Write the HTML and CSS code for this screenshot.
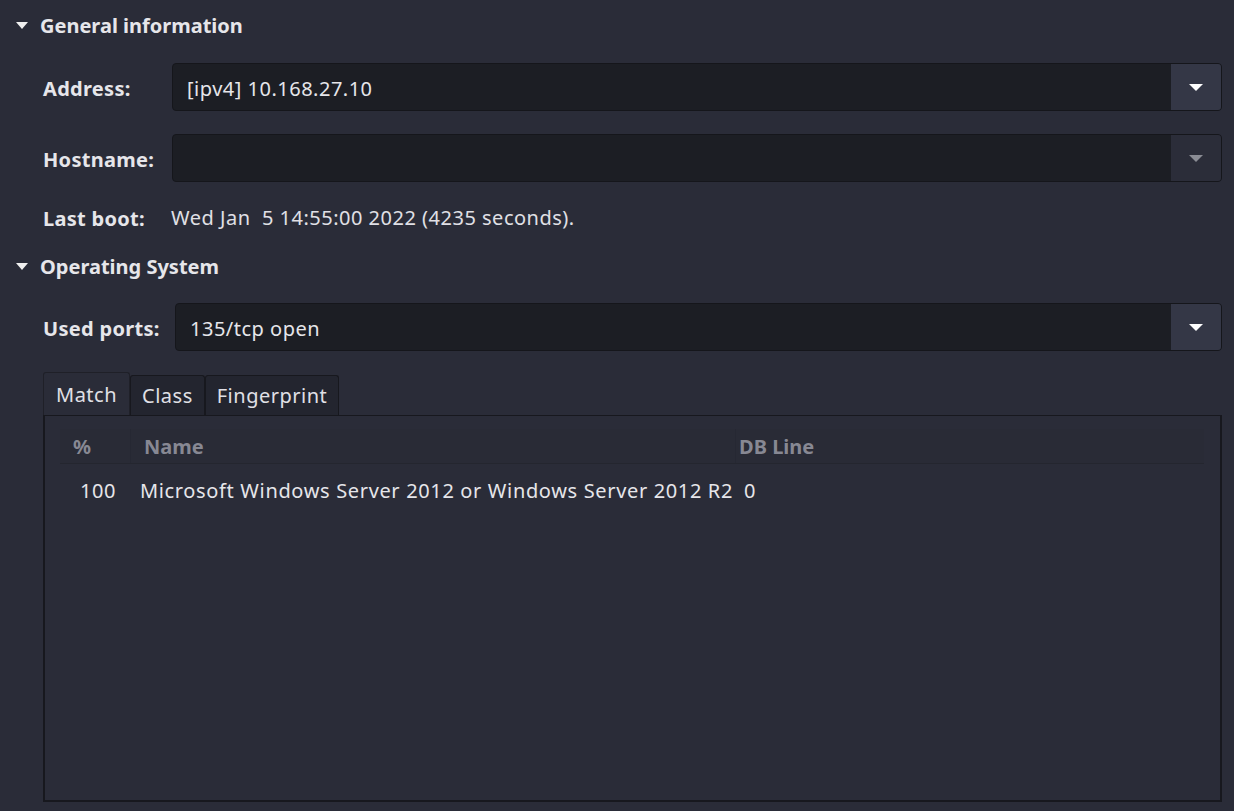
FILE: index.html
```html
<!DOCTYPE html>
<html>
<head>
<meta charset="utf-8">
<link rel="stylesheet" href="styles.css">
</head>
<body>
<div class="page">
  <div class="section-head"><span class="tri"></span><span>General information</span></div>
  <div class="row row-address">
    <div class="label w-addr">Address:</div>
    <div class="combo">
      <div class="combo-text">[ipv4] 10.168.27.10</div>
      <div class="combo-btn"><span class="arrow"></span></div>
    </div>
  </div>
  <div class="row row-host">
    <div class="label w-addr">Hostname:</div>
    <div class="combo">
      <div class="combo-text"></div>
      <div class="combo-btn dim"><span class="arrow dim"></span></div>
    </div>
  </div>
  <div class="row row-boot">
    <div class="label w-boot">Last boot:</div>
    <div class="value">Wed Jan &nbsp;5 14:55:00 2022 (4235 seconds).</div>
  </div>
  <div class="section-head os"><span class="tri"></span><span>Operating System</span></div>
  <div class="row row-ports">
    <div class="label w-ports">Used ports:</div>
    <div class="combo">
      <div class="combo-text">135/tcp open</div>
      <div class="combo-btn"><span class="arrow"></span></div>
    </div>
  </div>
  <div class="tabs">
    <div class="tab active">Match</div>
    <div class="tab">Class</div>
    <div class="tab">Fingerprint</div>
  </div>
  <div class="panel">
    <div class="thead">
      <div class="th c-pct">%</div>
      <div class="th c-name">Name</div>
      <div class="th c-db">DB Line</div>
    </div>
    <div class="trow">
      <div class="td c-pct">100</div>
      <div class="td c-name">Microsoft Windows Server 2012 or Windows Server 2012 R2</div>
      <div class="td c-db">0</div>
    </div>
  </div>
</div>
</body>
</html>
```
FILE: styles.css
```css
html, body {
  margin: 0;
  padding: 0;
  background: #2a2c38;
}
body {
  width: 1234px;
  height: 811px;
  overflow: hidden;
  font-family: "Noto Sans", "DejaVu Sans", sans-serif;
  font-size: 20px;
  letter-spacing: 0.5px;
  color: #e6e6ea;
}
.page {
  padding: 10px 12px 0 16px;
  display: flex;
  flex-direction: column;
}
.section-head {
  display: flex;
  align-items: center;
  height: 30px;
  font-weight: bold;
  letter-spacing: 0;
  gap: 12px;
}
.section-head.os {
  margin-top: 19px;
}
.tri {
  width: 0;
  height: 0;
  border-left: 6px solid transparent;
  border-right: 6px solid transparent;
  border-top: 7px solid #f0f0f0;
}
.row {
  display: flex;
  align-items: center;
  padding-left: 27px;
}
.row-address { margin-top: 23px; }
.row-host { margin-top: 23px; }
.row-boot { margin-top: 20px; height: 30px; }
.row-ports { margin-top: 22px; }
.label {
  font-weight: bold;
  letter-spacing: 0.3px;
  padding-top: 2px;
}
.w-addr { width: 129px; }
.w-boot { width: 128px; }
.w-ports { width: 132px; }
.value {
  color: #e0e0e6;
  padding-top: 1px;
}
.combo {
  flex: 1;
  height: 48px;
  display: flex;
  background: #1c1e24;
  border: 1px solid #15161b;
  border-radius: 4px;
  overflow: hidden;
  box-sizing: border-box;
}
.combo-text {
  flex: 1;
  display: flex;
  align-items: center;
  padding-left: 14px;
  padding-top: 2px;
}
.combo-btn {
  width: 50px;
  background: #343746;
  display: flex;
  align-items: center;
  justify-content: center;
}
.combo-btn.dim {
  background: #2b2d39;
}
.arrow {
  width: 0;
  height: 0;
  border-left: 7px solid transparent;
  border-right: 7px solid transparent;
  border-top: 7px solid #ffffff;
}
.arrow.dim {
  border-top-color: #8a8c94;
}
.tabs {
  display: flex;
  margin-top: 21px;
  margin-left: 27px;
  align-items: flex-end;
  height: 43px;
}
.tab {
  height: 40px;
  box-sizing: border-box;
  display: flex;
  align-items: center;
  padding: 0 11px;
  background: #23252f;
  border: 1px solid #17181e;
  border-bottom: none;
  border-radius: 3px 3px 0 0;
  color: #e0e0e6;
}
.tab.active {
  height: 43px;
  background: #2a2c38;
  padding: 0 12px;
  border-color: #1f2028;
}
.panel {
  margin-left: 27px;
  width: 1179px;
  height: 387px;
  box-sizing: border-box;
  border: 2px solid #17181e;
  border-top: 1px solid #17181e;
  background: #2a2c38;
  padding: 13px 16px 0 15px;
}
.thead {
  display: flex;
  height: 34px;
  align-items: center;
  border-bottom: 1px solid #24262f;
  color: #878893;
  font-weight: bold;
  letter-spacing: 0;
  background: #292b36;
}
.th {
  height: 100%;
  display: flex;
  align-items: center;
  box-sizing: border-box;
}
.c-pct {
  width: 70px;
  box-sizing: border-box;
}
.c-name {
  width: 605px;
  box-sizing: border-box;
}
.th.c-name, .th.c-db {
  border-left: 1px solid #262833;
}
.c-db {
  flex: 1;
}
.th.c-pct { padding-left: 13px; }
.th.c-name { padding-left: 13px; }
.th.c-db { padding-left: 3px; }
.trow {
  display: flex;
  height: 52px;
  align-items: center;
}
.td.c-pct { padding-left: 20px; }
.td.c-name { padding-left: 10px; letter-spacing: 0.65px; }
.td.c-db { padding-left: 9px; }
```
